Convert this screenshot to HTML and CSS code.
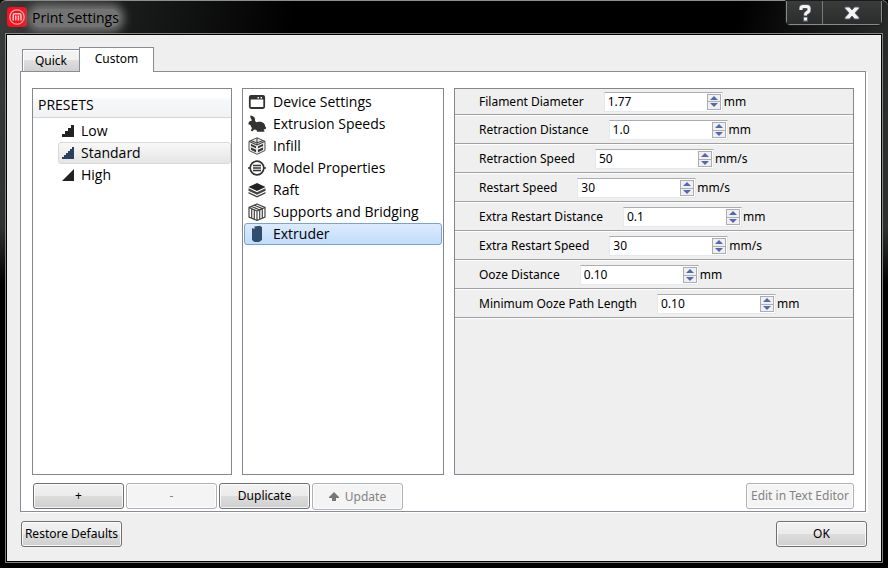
FILE: index.html
```html
<!DOCTYPE html>
<html lang="en">
<head>
<meta charset="utf-8">
<title>Print Settings</title>
<link rel="stylesheet" href="styles.css">
</head>
<body>
<div class="window">
  <header class="titlebar">
    <svg class="logo" viewBox="0 0 20 20" aria-hidden="true"><rect width="20" height="20" rx="4" fill="#f8101c"/><circle cx="10" cy="10" r="7.2" fill="none" stroke="#ffb0b4" stroke-width="1.300"/><path d="M6.200 13.600V8.400q0-1.600 1.600-1.600h4.600q1.600 0 1.600 1.600v5.200M8.700 13.600V8.600M11.400 13.600V8.600" fill="none" stroke="#ffc8ca" stroke-width="1.500"/></svg>
    <h1 class="title">Print Settings</h1>
    <div class="caption">
      <button class="cap help" type="button" aria-label="Help"><svg width="12" height="18" viewBox="0 0 12 18"><path d="M2 6V4.500Q2 2.500 4 2.500H8Q10 2.500 10 4.500V6Q10 8 7.500 8.800Q6.500 9.200 6.500 11.500" fill="none" stroke="#596070" stroke-width="4.600"/><path d="M4 12.800h5v5H4z" fill="#596070"/><path d="M2 6V4.500Q2 2.500 4 2.500H8Q10 2.500 10 4.500V6Q10 8 7.500 8.800Q6.500 9.200 6.500 11.500" fill="none" stroke="#f4f4f4" stroke-width="3"/><path d="M5 13.500h3v3H5z" fill="#f4f4f4"/></svg></button>
      <button class="cap close" type="button" aria-label="Close"><svg width="16" height="14" viewBox="0 0 16 14"><path d="M1 1h4.500L8 4l2.500-3H15v1.500L11 7l4 4.500V13h-4.500L8 10l-2.500 3H1v-1.500L5 7 1 2.500z" fill="#f4f4f4" stroke="#596070"/></svg></button>
    </div>
  </header>
  <main class="client">
    <div class="tabs" role="tablist">
      <button class="tab" type="button" role="tab" aria-selected="false">Quick</button>
      <button class="tab active" type="button" role="tab" aria-selected="true">Custom</button>
    </div>
    <section class="pane">
      <div class="columns">
        <nav class="list" aria-label="Presets">
          <h2 class="list-head">PRESETS</h2>
          <ul class="presets">
            <li><a href="#low"><svg class="step" viewBox="0 0 12 12"><path d="M0 12V9h3V6h3V3h3V0h3v12z" fill="#222"/></svg>Low</a></li>
            <li><a class="chosen" href="#standard"><svg class="step" viewBox="0 0 12 12"><path d="M0 12v-2h2V8h2V6h2V4h2V2h2V0h2v12z" fill="#29405c"/></svg>Standard</a></li>
            <li><a href="#high"><svg class="step" viewBox="0 0 12 12"><path d="M0 12L12 0v12z" fill="#222"/></svg>High</a></li>
          </ul>
        </nav>
        <nav class="list" aria-label="Categories">
          <ul class="categories">
            <li><a href="#device"><svg class="icon" viewBox="0 0 18 18"><rect x="1.800" y="3" width="14.400" height="12" rx="1.200" fill="none" stroke="#333" stroke-width="1.800"/><path d="M2 3h14v3.500H2z" fill="#333"/><path d="M9.500 4h1.500v1.500H9.500zM12.500 4H14v1.500h-1.500z" fill="#fff"/></svg>Device Settings</a></li>
            <li><a href="#speeds"><svg class="icon" viewBox="0 0 18 18"><path d="M4.200 .8Q5.800 1 6.300 4Q6.500 1.500 3 .5Q1.800 .8 2.600 3L4 5.600Q1 5.800 .3 8.300Q.2 9.800 2.500 10Q2.800 12 4 13L2.800 15.500Q3 16.500 4.500 16.300L6 14.500L8.500 15L9 16.800H16.200Q17 15.800 15.500 15L16.500 14.300Q18.500 14.200 18 12.300L17.300 11.800Q17 8 13 6.800Q9.500 6.300 8 7.300L7 5.500Q7.500 2 4.200 .8z" fill="#333"/></svg>Extrusion Speeds</a></li>
            <li><a href="#infill"><svg class="icon" viewBox="0 0 18 18"><path d="M9 .8L17 4.300V13.500L9 17.300L1 13.500V4.300z" fill="#e8e8e8" stroke="#555"/><path d="M1 4.300L9 8l8-3.700M9 1v7M3 3.500L9 6l6-2.500" fill="none" stroke="#444" stroke-width="1.100"/><path d="M3 7l5 2.300v2L3 9zM15 7l-5 2.300v2L15 9zM3 10.500l5 2.300v2.500l-5-2.500zM15 10.500l-5 2.300v2.500l5-2.500z" fill="#333"/></svg>Infill</a></li>
            <li><a href="#model"><svg class="icon" viewBox="0 0 18 18"><circle cx="9" cy="9" r="6.800" fill="none" stroke="#333" stroke-width="1.700"/><path d="M5 6.500h8M5 9h8M5 11.500h8M0 9h3M15 9h3" stroke="#333" stroke-width="1.400"/></svg>Model Properties</a></li>
            <li><a href="#raft"><svg class="icon" viewBox="0 0 18 18"><path d="M9 2l8.500 4L9 10 .5 6z" fill="#222"/><path d="M.5 7.200L9 11.200l8.500-4v2.500L9 13.700.5 9.700zM.5 11L9 15l8.500-4v1.500L9 16.500.5 12.500z" fill="#444"/></svg>Raft</a></li>
            <li><a href="#supports"><svg class="icon" viewBox="0 0 18 18"><path d="M9 1l8 3.500V14l-8 3.500L1 14V4.500zM1 4.500L9 8l8-3.500M9 8v9.500M3.700 5.500v9.500M6.300 7v9.500M11.700 7v9.500M14.300 5.500v9.500M3.700 3.500L11.800 7M6.300 2.300l8.200 3.300" fill="none" stroke="#444" stroke-width="1.200"/></svg>Supports and Bridging</a></li>
            <li><a class="chosen" href="#extruder"><svg class="icon" viewBox="0 0 18 18"><path d="M4 3l2.500 1V1.500L12 .8l2 1.500V15l-3 2H6.500L4 15z" fill="#2f4d6c"/></svg>Extruder</a></li>
          </ul>
        </nav>
        <form class="list settings" id="settings">
          <div class="row"><label for="f1">Filament Diameter</label><span class="spin"><input id="f1" type="text" value="1.77"><span class="arrows"><button type="button" class="up" aria-label="Increase"></button><button type="button" class="down" aria-label="Decrease"></button></span></span><span>mm</span></div>
          <div class="row"><label for="f2">Retraction Distance</label><span class="spin"><input id="f2" type="text" value="1.0"><span class="arrows"><button type="button" class="up" aria-label="Increase"></button><button type="button" class="down" aria-label="Decrease"></button></span></span><span>mm</span></div>
          <div class="row"><label for="f3">Retraction Speed</label><span class="spin"><input id="f3" type="text" value="50"><span class="arrows"><button type="button" class="up" aria-label="Increase"></button><button type="button" class="down" aria-label="Decrease"></button></span></span><span>mm/s</span></div>
          <div class="row"><label for="f4">Restart Speed</label><span class="spin"><input id="f4" type="text" value="30"><span class="arrows"><button type="button" class="up" aria-label="Increase"></button><button type="button" class="down" aria-label="Decrease"></button></span></span><span>mm/s</span></div>
          <div class="row"><label for="f5">Extra Restart Distance</label><span class="spin"><input id="f5" type="text" value="0.1"><span class="arrows"><button type="button" class="up" aria-label="Increase"></button><button type="button" class="down" aria-label="Decrease"></button></span></span><span>mm</span></div>
          <div class="row"><label for="f6">Extra Restart Speed</label><span class="spin"><input id="f6" type="text" value="30"><span class="arrows"><button type="button" class="up" aria-label="Increase"></button><button type="button" class="down" aria-label="Decrease"></button></span></span><span>mm/s</span></div>
          <div class="row"><label for="f7">Ooze Distance</label><span class="spin"><input id="f7" type="text" value="0.10"><span class="arrows"><button type="button" class="up" aria-label="Increase"></button><button type="button" class="down" aria-label="Decrease"></button></span></span><span>mm</span></div>
          <div class="row"><label for="f8">Minimum Ooze Path Length</label><span class="spin"><input id="f8" type="text" value="0.10"><span class="arrows"><button type="button" class="up" aria-label="Increase"></button><button type="button" class="down" aria-label="Decrease"></button></span></span><span>mm</span></div>
        </form>
      </div>
      <div class="actions">
        <button class="btn" type="button">+</button>
        <button class="btn" type="button" disabled>-</button>
        <button class="btn" type="button">Duplicate</button>
        <button class="btn tall" type="button" disabled><svg width="10" height="10" viewBox="0 0 10 10" aria-hidden="true"><path d="M5 0l5 5v1H7v3H3V6H0V5z" fill="#777"/></svg>Update</button>
        <button class="btn edit" type="button" disabled>Edit in Text Editor</button>
      </div>
    </section>
    <footer class="footer">
      <button class="btn restore" type="button">Restore Defaults</button>
      <button class="btn" type="button">OK</button>
    </footer>
  </main>
</div>
</body>
</html>
```
FILE: styles.css
```css
* { box-sizing: border-box; }

body {
  margin: 0;
  background: #000;
  color: #000;
  font: 12px/16px "Noto Sans", sans-serif;
}

button, input { font: inherit; color: inherit; }
h1, h2, ul { margin: 0; padding: 0; font-weight: 400; list-style: none; }
a { color: inherit; text-decoration: none; }

.window {
  display: flex;
  flex-direction: column;
  height: 100vh;
  padding: 0 6px 6px;
  border-top: 1px solid #8b908e;
  border-radius: 6px 6px 4px 4px;
  background: linear-gradient(#0000 40%, #000 50%), linear-gradient(100deg, #3a3c3b 0, #1c1e1d 12%, #000 30%, #000 75%, #2c2e2d 92%, #333534);
}

.titlebar {
  display: flex;
  align-items: flex-start;
  flex: 0 0 33px;
}

.logo { width: 20px; height: 20px; margin: 6px 0 0 1px; }

.title {
  margin: 8px 0 0 5px;
  font: 14px/18px "Open Sans", sans-serif;
  background: #737373;
  box-shadow: 0 0 8px 5px #737373;
  border-radius: 8px;
}

.caption {
  display: flex;
  margin-left: auto;
  height: 24px;
  border: 1px solid #888b8a;
  border-top: 0;
  border-radius: 0 0 4px 4px;
  outline: 1px solid #1a1c1b;
}

.cap {
  display: grid;
  place-items: center;
  padding: 0;
  border: 0;
  background: linear-gradient(#3a3c3b, #2b2d2c);
}

.help { width: 36px; border-right: 1px solid #777a79; }
.close { width: 58px; }

.client {
  display: flex;
  flex-direction: column;
  flex: 1;
  min-height: 0;
  padding: 12px 15px 14px 13px;
  border: 1px solid #000;
  outline: 1px solid #7f8382;
  background: #efefef;
}

.tabs { display: flex; align-items: flex-end; padding-left: 2px; }

.tab {
  width: 57px;
  height: 22px;
  padding: 0;
  border: 1px solid #898c95;
  border-right: 0;
  border-bottom: 0;
  background: linear-gradient(#f2f2f2 0 45%, #dedede 50%, #cfcfcf);
  box-shadow: inset 1px 1px #fff;
}

.tab.active {
  z-index: 1;
  width: 75px;
  height: 25px;
  margin-bottom: -1px;
  padding: 0 0 2px;
  border-right: 1px solid #898c95;
  background: #fff;
}

.pane {
  display: flex;
  flex-direction: column;
  flex: 1;
  min-height: 0;
  padding: 16px 11px 1px;
  border: 1px solid #898c95;
  box-shadow: 2px 1px #fff;
  background: #fff;
}

.columns {
  display: grid;
  grid-template-columns: 200fr 202fr 400fr;
  gap: 10px;
  flex: 1;
  min-height: 0;
}

.list {
  min-width: 0;
  border: 1px solid #828790;
  background: #fff;
  font: 14px/22px "Open Sans", sans-serif;
}

.list-head {
  height: 29px;
  padding: 5px 5px 0;
  border-bottom: 1px solid #d5d5d5;
  background: linear-gradient(#fff 0 9px, #f7f8fa 10px, #f1f2f4);
  font-size: 14px;
}

.presets { padding: 2px 0 0 25px; }
.presets a { display: flex; align-items: center; gap: 7px; height: 22px; padding: 0 3px; border: 1px solid transparent; border-radius: 3px; }
.presets .chosen { border-color: #d9d9d9; background: linear-gradient(#f8f8f8, #e5e5e5); }
.step { width: 12px; height: 12px; }

.categories { padding: 2px 1px; }
.categories a { display: flex; align-items: center; gap: 7px; height: 22px; padding: 0 3px; border: 1px solid transparent; border-radius: 3px; }
.categories .chosen { border-color: #7da2ce; background: linear-gradient(#dcebfc, #c1dcfc); }
.icon { width: 18px; height: 18px; }

.settings { background: #efefef; font: inherit; }

.row {
  display: flex;
  align-items: center;
  height: 29px;
  padding: 2px 24px 0;
  border-bottom: 1px solid #a0a0a0;
  box-shadow: 0 1px #fff;
}

.row:first-child { height: 26px; padding-top: 0; }

.spin {
  display: flex;
  width: 119px;
  height: 20px;
  margin: 0 1px 0 20px;
  padding: 1px;
  border: 1px solid #e3e9ef;
  border-top-color: #abadb3;
  background: #fff;
}

.spin input { flex: 1; min-width: 0; padding: 0 2px; border: 0; outline: 0; background: none; }

.arrows { display: grid; width: 14px; }
.arrows button { display: grid; place-items: center; padding: 0; border: 1px solid #abadb3; background: #f0f0f0; }
.arrows .down { border-top: 0; }
.arrows button::before { content: ""; border: 4px solid transparent; }
.arrows .up::before { border-top: 0; border-bottom-color: #5468b0; }
.arrows .down::before { border-bottom: 0; border-top-color: #5468b0; }

.actions { display: flex; align-items: flex-start; gap: 2px; height: 35px; padding: 8px 0 0 1px; }

.btn {
  display: flex;
  align-items: center;
  justify-content: center;
  gap: 6px;
  width: 91px;
  height: 26px;
  padding: 0;
  border: 1px solid #707070;
  border-radius: 3px;
  background: linear-gradient(#f2f2f2, #ebebeb 48%, #dddddd 50%, #cfcfcf);
  box-shadow: inset 0 0 0 1px #fffc;
}

.btn:disabled { border-color: #adb2b5; background: #f4f4f4; color: #838383; }
.tall { height: 27px; }
.edit { width: 108px; margin-left: auto; }
.restore { width: 101px; }
.footer { display: flex; justify-content: space-between; margin: 0 -1px 0 1px; padding-top: 9px; }
```
